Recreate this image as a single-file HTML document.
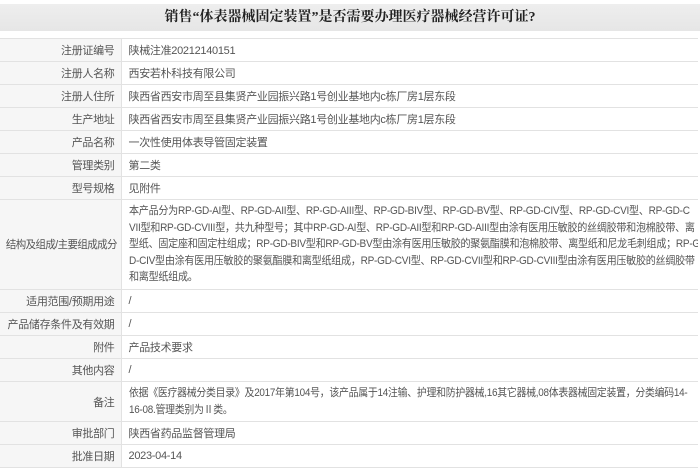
<!DOCTYPE html>
<html><head><meta charset="utf-8"><style>
*{margin:0;padding:0;box-sizing:border-box}
body{width:700px;height:462px;background:#fff;overflow:hidden;font-family:"Liberation Sans","Microsoft YaHei","Noto Sans CJK SC",sans-serif;color:#555;font-size:11px;letter-spacing:-0.3px}
.title{position:absolute;left:0;top:4px;width:700px;height:27px;background:linear-gradient(#eee,#e6e6e6);text-align:center;line-height:27px;font-family:"Liberation Serif","Noto Serif CJK SC",serif;font-weight:bold;font-size:14px;color:#222;letter-spacing:0}
table{position:absolute;left:0;top:38px;width:698px;border-collapse:collapse;table-layout:fixed}
td{border-top:1px solid #e2e2e2;border-bottom:1px solid #e2e2e2;height:23px;padding:0 7px;vertical-align:middle;white-space:nowrap;overflow:hidden}
td.l{text-align:right;background:#f6f6f6;border-right:1px solid #e2e2e2;padding:0 6px 0 0}
td.v{background:#fff}
.m{line-height:16.6px;padding-top:3px;padding-bottom:3px}
.sq{display:block;transform:scaleX(0.915);transform-origin:left center}
.sr{display:inline-block;transform:scaleX(0.95);transform-origin:right center}
</style></head><body>
<div class="title">销售“体表器械固定装置”是否需要办理医疗器械经营许可证?</div>
<table>
<colgroup><col style="width:121px"><col style="width:577px"></colgroup>
<tr><td class="l">注册证编号</td><td class="v">陕械注准20212140151</td></tr>
<tr><td class="l">注册人名称</td><td class="v">西安若朴科技有限公司</td></tr>
<tr><td class="l">注册人住所</td><td class="v">陕西省西安市周至县集贤产业园振兴路1号创业基地内c栋厂房1层东段</td></tr>
<tr><td class="l">生产地址</td><td class="v">陕西省西安市周至县集贤产业园振兴路1号创业基地内c栋厂房1层东段</td></tr>
<tr><td class="l">产品名称</td><td class="v">一次性使用体表导管固定装置</td></tr>
<tr><td class="l">管理类别</td><td class="v">第二类</td></tr>
<tr><td class="l">型号规格</td><td class="v">见附件</td></tr>
<tr><td class="l" style="height:87px;letter-spacing:-0.6px"><span class="sr">结构及组成/主要组成成分</span></td><td class="v m"><span class="sq">本产品分为RP-GD-AI型、RP-GD-AII型、RP-GD-AIII型、RP-GD-BIV型、RP-GD-BV型、RP-GD-CIV型、RP-GD-CVI型、RP-GD-C<br>VII型和RP-GD-CVIII型，共九种型号；其中RP-GD-AI型、RP-GD-AII型和RP-GD-AIII型由涂有医用压敏胶的丝绸胶带和泡棉胶带、离<br>型纸、固定座和固定柱组成；RP-GD-BIV型和RP-GD-BV型由涂有医用压敏胶的聚氨酯膜和泡棉胶带、离型纸和尼龙毛刺组成；RP-G<br>D-CIV型由涂有医用压敏胶的聚氨酯膜和离型纸组成，RP-GD-CVI型、RP-GD-CVII型和RP-GD-CVIII型由涂有医用压敏胶的丝绸胶带<br>和离型纸组成。</span></td></tr>
<tr><td class="l">适用范围/预期用途</td><td class="v">/</td></tr>
<tr><td class="l">产品储存条件及有效期</td><td class="v">/</td></tr>
<tr><td class="l">附件</td><td class="v">产品技术要求</td></tr>
<tr><td class="l">其他内容</td><td class="v">/</td></tr>
<tr><td class="l" style="height:34px">备注</td><td class="v m"><span class="sq" style="transform:scaleX(0.9)">依据《医疗器械分类目录》及2017年第104号，该产品属于14注输、护理和防护器械,16其它器械,08体表器械固定装置，分类编码14-<br>16-08.管理类别为Ⅱ类。</span></td></tr>
<tr><td class="l">审批部门</td><td class="v">陕西省药品监督管理局</td></tr>
<tr><td class="l">批准日期</td><td class="v">2023-04-14</td></tr>
</table>
</body></html>
